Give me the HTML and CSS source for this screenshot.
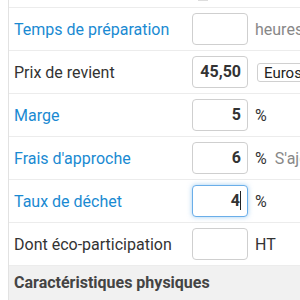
FILE: index.html
```html
<!DOCTYPE html>
<html>
<head>
<meta charset="utf-8">
<link rel="stylesheet" href="styles.css">
</head>
<body>
<div class="panel">
  <div class="row top"><span class="top-mark"></span></div>
  <div class="row">
    <span class="label link">Temps de préparation</span>
    <span class="field"></span>
    <span class="unit muted">heures</span>
  </div>
  <div class="row">
    <span class="label">Prix de revient</span>
    <span class="field">45,50</span>
    <span class="unit"><span class="select">Euros</span></span>
  </div>
  <div class="row">
    <span class="label link">Marge</span>
    <span class="field">5</span>
    <span class="unit">%</span>
  </div>
  <div class="row">
    <span class="label link">Frais d'approche</span>
    <span class="field">6</span>
    <span class="unit">%<span class="muted note">S'ajoute</span></span>
  </div>
  <div class="row">
    <span class="label link">Taux de déchet</span>
    <span class="field focus">4<span class="caret"></span></span>
    <span class="unit">%</span>
  </div>
  <div class="row">
    <span class="label">Dont éco-participation</span>
    <span class="field"></span>
    <span class="unit">HT</span>
  </div>
  <div class="section">Caractéristiques physiques</div>
</div>
</body>
</html>
```
FILE: styles.css
```css
html, body {
  margin: 0;
  padding: 0;
  background: #fff;
  width: 300px;
  height: 300px;
  overflow: hidden;
}
body {
  font-family: Roboto, "Liberation Sans", sans-serif;
  font-size: 16px;
  color: #333;
}
.panel {
  margin-left: 8px;
  border-left: 1px solid #e2e2e2;
  height: 300px;
}
.row {
  display: grid;
  grid-template-columns: 176px 56px 1fr;
  column-gap: 7px;
  align-items: center;
  height: 42px;
  border-bottom: 1px solid #ececec;
  white-space: nowrap;
}
.row.top {
  display: block;
  height: 7px;
  position: relative;
}
.top-mark {
  position: absolute;
  left: 189px;
  top: 0;
  width: 10px;
  height: 1px;
  background: #ddd;
}
.label {
  padding-left: 5px;
  overflow: hidden;
}
.link {
  color: #1a8ad2;
}
.field {
  box-sizing: border-box;
  height: 32px;
  border: 1px solid #cfcfcf;
  border-radius: 4px;
  text-align: right;
  padding-right: 6px;
  font-weight: bold;
  line-height: 30px;
  color: #333;
  background: #fff;
}
.field.focus {
  border-color: #6aaee9;
  box-shadow: 0 0 5px rgba(102, 175, 233, 0.6);
}
.caret {
  display: inline-block;
  width: 1px;
  height: 19px;
  background: #222;
  vertical-align: -4px;
}
.unit {
  overflow: hidden;
}
.muted {
  color: #888;
}
.note {
  margin-left: 8px;
}
.select {
  display: inline-block;
  height: 19px;
  line-height: 18px;
  box-sizing: border-box;
  border: 1px solid #d0d0d0;
  border-radius: 3px;
  padding: 0 6px;
  font-size: 15px;
  color: #222;
  width: 60px;
  margin-left: 2px;
  vertical-align: middle;
}
.section {
  background: #f1f1f1;
  height: 34px;
  line-height: 34px;
  padding-left: 5px;
  font-weight: bold;
  color: #444;
}
```
